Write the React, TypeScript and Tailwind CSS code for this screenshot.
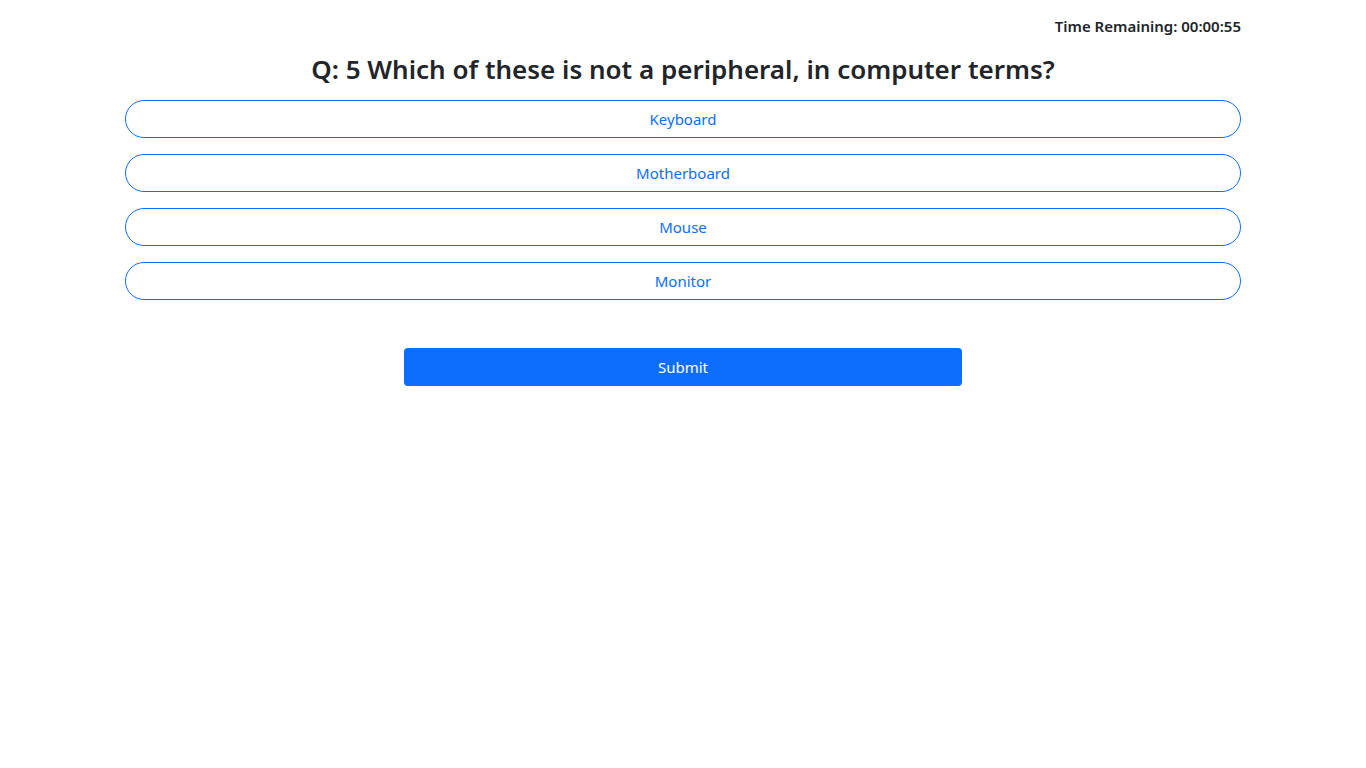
const options = ["Keyboard", "Motherboard", "Mouse", "Monitor"];

export default function App() {
  return (
    <div
      className="min-h-screen bg-white text-[#212529]"
      style={{ fontFamily: '"Noto Sans", "Open Sans", sans-serif' }}
    >
      <div className="mx-auto w-[1140px] px-3">
        {/* Timer */}
        <div className="flex justify-end pt-[14px] text-[15px] font-semibold leading-6">
          Time Remaining: 00:00:55
        </div>

        {/* Question */}
        <h3 className="mt-[14px] h-[34px] text-center text-[26px] font-semibold leading-[34px]">
          Q: 5 Which of these is not a peripheral, in computer terms?
        </h3>

        {/* Options */}
        <div className="mt-[14px] flex flex-col gap-4">
          {options.map((opt) => (
            <button
              key={opt}
              className="h-[38px] w-full rounded-full border border-[#0d6efd] bg-white pt-px text-[15px] text-[#0d6efd]"
            >
              {opt}
            </button>
          ))}
        </div>

        <div className="mt-12 flex justify-center">
          <button className="h-[38px] w-1/2 rounded-[4px] bg-[#0d6efd] pt-px text-[15px] text-white">
            Submit
          </button>
        </div>
      </div>
    </div>
  );
}
